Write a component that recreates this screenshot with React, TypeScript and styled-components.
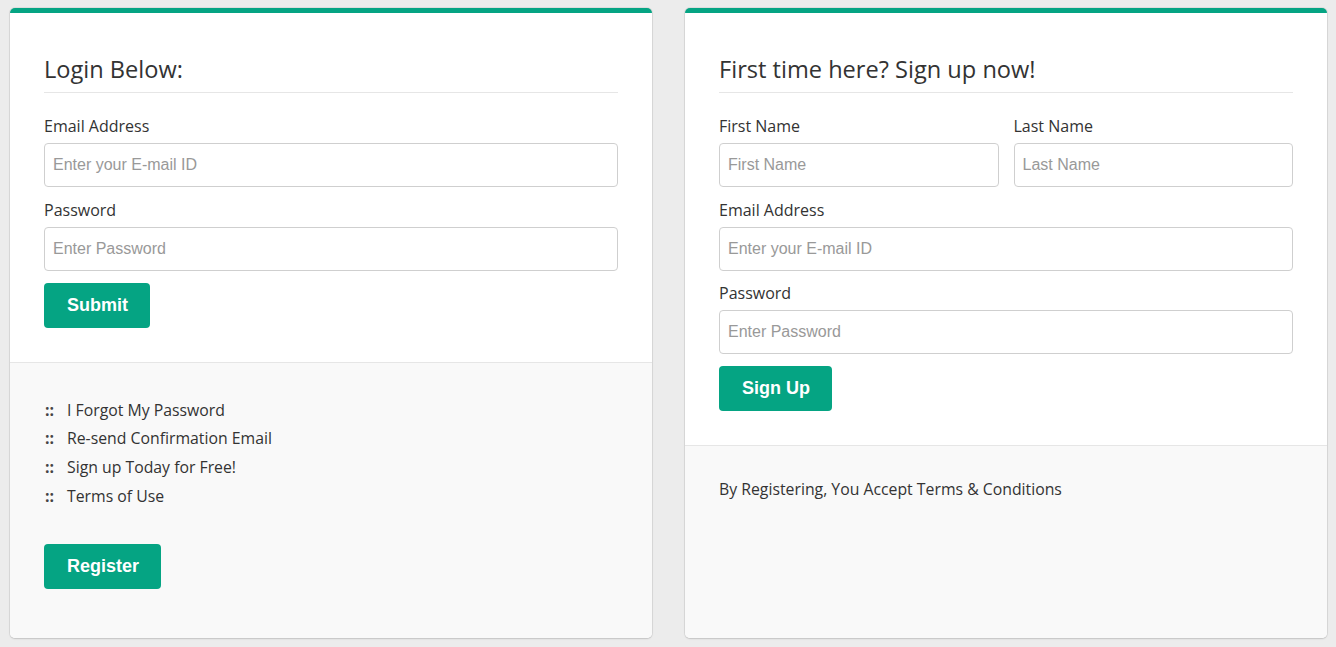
import React from "react";
import styled, { createGlobalStyle } from "styled-components";

const GREEN = "#05a483";

const GlobalStyle = createGlobalStyle`
  html, body {
    margin: 0;
    padding: 0;
    background: #ececec;
  }
  * { box-sizing: border-box; }
`;

const Page = styled.div`
  display: flex;
  gap: 33px;
  padding: 8px 9px 9px 10px;
  font-family: "Open Sans", "Noto Sans", sans-serif;
  color: #333;
`;

const Card = styled.section`
  flex: 1;
  height: 630px;
  display: flex;
  flex-direction: column;
  background: #fff;
  border-top: 5px solid ${GREEN};
  border-radius: 5px;
  box-shadow: 0 0 0 1px rgba(0, 0, 0, 0.06), 0 1px 2px rgba(0, 0, 0, 0.12);
  overflow: hidden;
`;

const Body = styled.div`
  padding: 41px 34px 34px;
`;

const Heading = styled.h2`
  margin: 0 0 22px;
  padding-bottom: 8px;
  border-bottom: 1px solid #e6e6e6;
  font-size: 23.6px;
  font-weight: 400;
  line-height: 30px;
  color: #333;
`;

const Field = styled.div`
  margin-bottom: 11.5px;
`;

const Row = styled.div`
  display: grid;
  grid-template-columns: 1fr 1fr;
  gap: 15px;
`;

const Label = styled.label`
  display: block;
  margin-bottom: 6px;
  font-size: 16px;
  line-height: 22px;
  color: #333;
`;

const Input = styled.input`
  display: block;
  width: 100%;
  height: 44px;
  padding: 0 8px;
  border: 1px solid #cfcfcf;
  border-radius: 4px;
  background: #fff;
  font-family: "Liberation Sans", Arial, sans-serif;
  font-size: 16px;
  color: #333;
  outline: none;
  &::placeholder {
    color: #999;
  }
`;

const Button = styled.button`
  display: inline-block;
  height: 45px;
  padding: 0 22px 0 23px;
  margin: 0.5px 0 0;
  border: none;
  border-radius: 4px;
  background: ${GREEN};
  color: #fff;
  font-family: "Liberation Sans", Arial, sans-serif;
  font-weight: 700;
  font-size: 18px;
  cursor: pointer;
`;

const Footer = styled.div<{ $padTop: number }>`
  flex: 1;
  background: #f9f9f9;
  border-top: 1px solid #e6e6e6;
  padding: ${(p) => p.$padTop}px 34px 34px;
`;

const Links = styled.ul`
  list-style: none;
  margin: 0 0 33px;
  padding: 0;
`;

const LinkItem = styled.li`
  display: flex;
  font-size: 15.8px;
  line-height: 28.67px;
  color: #333;
`;

const Bullet = styled.span`
  width: 23px;
  padding-left: 1px;
  font-weight: 700;
  color: #444;
`;

const Note = styled.p`
  margin: 0;
  font-size: 15.8px;
  line-height: 22px;
  color: #333;
`;

export default function App() {
  return (
    <>
      <GlobalStyle />
      <Page>
        <Card>
          <Body>
            <Heading>Login Below:</Heading>
            <Field>
              <Label>Email Address</Label>
              <Input placeholder="Enter your E-mail ID" />
            </Field>
            <Field>
              <Label>Password</Label>
              <Input type="password" placeholder="Enter Password" />
            </Field>
            <Button>Submit</Button>
          </Body>
          <Footer $padTop={33}>
            <Links>
              {[
                "I Forgot My Password",
                "Re-send Confirmation Email",
                "Sign up Today for Free!",
                "Terms of Use",
              ].map((t) => (
                <LinkItem key={t}>
                  <Bullet>::</Bullet>
                  {t}
                </LinkItem>
              ))}
            </Links>
            <Button>Register</Button>
          </Footer>
        </Card>
        <Card>
          <Body>
            <Heading>First time here? Sign up now!</Heading>
            <Row>
              <Field>
                <Label>First Name</Label>
                <Input placeholder="First Name" />
              </Field>
              <Field>
                <Label>Last Name</Label>
                <Input placeholder="Last Name" />
              </Field>
            </Row>
            <Field>
              <Label>Email Address</Label>
              <Input placeholder="Enter your E-mail ID" />
            </Field>
            <Field>
              <Label>Password</Label>
              <Input type="password" placeholder="Enter Password" />
            </Field>
            <Button>Sign Up</Button>
          </Body>
          <Footer $padTop={31.5}>
            <Note>By Registering, You Accept Terms &amp; Conditions</Note>
          </Footer>
        </Card>
      </Page>
    </>
  );
}
